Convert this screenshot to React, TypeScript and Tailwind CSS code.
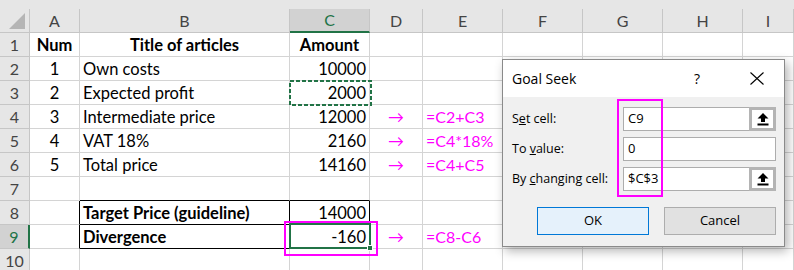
import React from 'react';

type Cell = { v?: string; cls?: string };

const COLS = ['A', 'B', 'C', 'D', 'E', 'F', 'G', 'H', 'I'];

const num = 'justify-end';
const mid = 'justify-center';
const bold = 'font-bold text-[15.5px]';
const pink = 'text-[#ff00ff] text-[16px]';

// row contents, columns A..I
const ROWS: Cell[][] = [
  [{ v: 'Num', cls: `${mid} ${bold}` }, { v: 'Title of articles', cls: `${mid} ${bold}` }, { v: 'Amount', cls: `${mid} ${bold}` }],
  [{ v: '1', cls: mid }, { v: 'Own costs' }, { v: '10000', cls: num }],
  [{ v: '2', cls: mid }, { v: 'Expected profit' }, { v: '2000', cls: num }],
  [{ v: '3', cls: mid }, { v: 'Intermediate price' }, { v: '12000', cls: num }, { v: '→', cls: `${mid} ${pink}` }, { v: '=C2+C3', cls: pink }],
  [{ v: '4', cls: mid }, { v: 'VAT 18%' }, { v: '2160', cls: num }, { v: '→', cls: `${mid} ${pink}` }, { v: '=C4*18%', cls: pink }],
  [{ v: '5', cls: mid }, { v: 'Total price' }, { v: '14160', cls: num }, { v: '→', cls: `${mid} ${pink}` }, { v: '=C4+C5', cls: pink }],
  [{ cls: '' }, { cls: 'border-b-black' }, { cls: 'border-b-black' }],
  [{ cls: 'border-r-black' }, { v: 'Target Price (guideline)', cls: `${bold} border-r-black border-b-black` }, { v: '14000', cls: `${num} border-r-black border-b-black` }],
  [{ cls: 'border-r-black' }, { v: 'Divergence', cls: `${bold} border-r-black border-b-black` }, { v: '-160', cls: `${num} border-r-black border-b-black` }, { v: '→', cls: `${mid} ${pink}` }, { v: '=C8-C6', cls: pink }],
  [],
];

const UploadIcon = () => (
  <svg width="12" height="13" viewBox="0 0 12 13">
    <path d="M6 0 L11.5 5.5 L8 5.5 L8 9 L4 9 L4 5.5 L0.5 5.5 Z" fill="black" />
    <rect x="0.5" y="10.5" width="11" height="2" fill="black" />
  </svg>
);

const RefInput = ({ value }: { value: string }) => (
  <div className="flex h-[24px] w-[153px]">
    <div className="flex-1 bg-white border border-[#adadad] border-r-0 flex items-center pl-[4px] text-[13px]">{value}</div>
    <div className="w-[27px] border-[3px] border-[#b4b4b4] bg-white flex items-center justify-center">
      <UploadIcon />
    </div>
  </div>
);

export default function App() {
  return (
    <div className="relative w-[794px] h-[270px] overflow-hidden bg-white font-['Lato',sans-serif] text-black">
      <div className="h-[9px] bg-[#e6e6e6]" />
      <div className="grid grid-cols-[30px_50px_210px_80px_53px_80px_80px_80px_80px_1fr] grid-rows-[24px_repeat(10,24px)]">
        {/* corner */}
        <div className="relative bg-[#e6e6e6] border-r border-b border-[#c6c6c6]">
          <svg className="absolute left-[9px] top-[4px]" width="17" height="17" viewBox="0 0 17 17">
            <path d="M16 0 L16 16 L0 16 Z" fill="#b5b5b5" />
          </svg>
        </div>
        {COLS.map((c) =>
          c === 'C' ? (
            <div key={c} className="bg-[#d2d2d2] border-r border-[#c6c6c6] border-b-2 border-b-[#217346] flex items-center justify-center text-[16px] text-[#217346]">
              {c}
            </div>
          ) : (
            <div key={c} className="bg-[#e6e6e6] border-r border-b border-[#c6c6c6] flex items-center justify-center text-[16px] text-[#444]">
              {c}
            </div>
          )
        )}
        {ROWS.map((row, r) => (
          <React.Fragment key={r}>
            {r === 8 ? (
              <div className="bg-[#d2d2d2] border-r-2 border-r-[#217346] border-b border-[#c6c6c6] flex items-center justify-center text-[16px] text-[#217346]">
                {r + 1}
              </div>
            ) : (
              <div className="bg-[#e6e6e6] border-r border-b border-[#c6c6c6] flex items-center justify-center text-[16px] text-[#444]">
                {r + 1}
              </div>
            )}
            {COLS.map((c, i) => {
              const cell = row[i] || {};
              return (
                <div
                  key={c}
                  className={`border-r border-b border-[#d4d4d4] flex items-center px-[3px] pt-px text-[16.5px] whitespace-nowrap overflow-visible ${cell.cls || ''}`}
                >
                  {cell.v}
                </div>
              );
            })}
          </React.Fragment>
        ))}
      </div>

      {/* copy marquee on C3 */}
      <svg className="absolute left-[289px] top-[80px]" width="83" height="26">
        <rect x="1" y="1" width="81" height="24" fill="none" stroke="#217346" strokeWidth="2" strokeDasharray="4 2" />
      </svg>

      {/* active cell C9 */}
      <div className="absolute left-[289px] top-[223px] w-[82px] h-[26px] border-2 border-[#217346]" />
      <div className="absolute left-[367px] top-[245px] w-[6px] h-[6px] bg-[#217346] border border-white" />
      <div className="absolute left-[284px] top-[221px] w-[94px] h-[35px] border-2 border-[#ff00ff]" />

      {/* Goal Seek dialog */}
      <div className="absolute left-[502px] top-[59px] w-[283px] h-[188px] border border-[#8a8a8a] bg-[#f0f0f0] shadow-[3px_4px_10px_rgba(0,0,0,0.3)] flex flex-col font-['Open_Sans',sans-serif] text-[12.5px] text-black">
        <div className="h-[37px] bg-white flex items-center pl-[9px] pr-[20px]">
          <span className="text-[14px]">Goal Seek</span>
          <span className="ml-auto mr-[50px] text-[14px]">?</span>
          <svg width="14" height="13" viewBox="0 0 14 13">
            <path d="M0.5 0.5 L13.5 12.5 M13.5 0.5 L0.5 12.5" stroke="black" strokeWidth="1.1" />
          </svg>
        </div>
        <div className="flex flex-col pt-[10px] pl-[9px] pr-[8px] gap-[6px]">
          <div className="flex items-center justify-between">
            <span>S<span className="underline">e</span>t cell:</span>
            <RefInput value="C9" />
          </div>
          <div className="flex items-center justify-between">
            <span>To <span className="underline">v</span>alue:</span>
            <div className="h-[24px] w-[153px] bg-white border border-[#adadad] flex items-center pl-[4px] text-[13px]">0</div>
          </div>
          <div className="flex items-center justify-between">
            <span>By <span className="underline">c</span>hanging cell:</span>
            <RefInput value="$C$3" />
          </div>
          <div className="flex justify-end gap-[15px] mt-[10px]">
            <button className="w-[112px] h-[28px] bg-[#e5f1fb] border border-[#0078d7] text-[13px]">OK</button>
            <button className="w-[112px] h-[28px] bg-[#e1e1e1] border border-[#adadad] text-[13px]">Cancel</button>
          </div>
        </div>
      </div>

      {/* magenta frame over the dialog inputs */}
      <div className="absolute left-[617px] top-[99px] w-[46px] h-[98px] border-2 border-[#ff00ff]" />
    </div>
  );
}
